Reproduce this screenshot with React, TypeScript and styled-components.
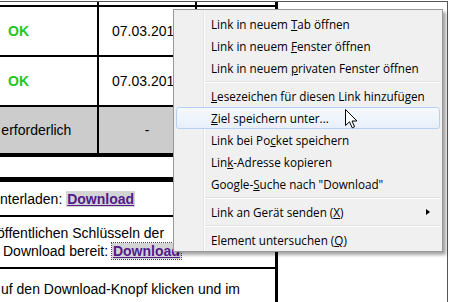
import styled, { createGlobalStyle } from "styled-components";

const GlobalStyle = createGlobalStyle`
  * { box-sizing: border-box; }
  html, body { margin: 0; padding: 0; background: #fff; }
  body { width: 450px; height: 302px; overflow: hidden; }
`;

const Screen = styled.div`
  position: relative;
  width: 450px;
  height: 302px;
  padding-top: 1px;
  overflow: hidden;
  background: #fff;
`;

const Viewport = styled.div`
  width: 448px;
  height: 301px;
  border-top: 1px solid #555;
  border-right: 1px solid #555;
  overflow: hidden;
`;

const Table = styled.div`
  width: 338px;
  margin-left: -60px;
  border-right: 3px solid #000;
  font-family: "Liberation Sans", Arial, sans-serif;
  font-size: 14px;
  color: #000;
`;

const Row = styled.div<{ $h: number; $line: number; $gray?: boolean; $split?: boolean }>`
  display: grid;
  grid-template-columns: ${(p) => (p.$split ? "159px 98px 1fr" : "1fr")};
  height: ${(p) => p.$h}px;
  border-bottom: ${(p) => p.$line}px solid #000;
  background: ${(p) => (p.$gray ? "#cccccc" : "#fff")};
`;

const Cell = styled.div`
  display: flex;
  align-items: center;
  justify-content: center;
  white-space: nowrap;
  overflow: hidden;
  border-right: 2px solid #000;
  &:last-child { border-right: none; }
`;

const Status = styled.span`
  color: #22c722;
  font-weight: bold;
`;

const TextCell = styled.div`
  display: flex;
  flex-direction: column;
  justify-content: center;
  padding-left: 60px;
  line-height: 18px;
  white-space: nowrap;
`;

const Line = styled.div<{ $shift?: number }>`
  margin-left: ${(p) => p.$shift ?? 0}px;
`;

const DlLink = styled.a<{ $focus?: boolean }>`
  color: #551a8b;
  font-weight: bold;
  text-decoration: underline;
  background: #d4d4d4;
  padding: 0 1px;
  outline: ${(p) => (p.$focus ? "1px dotted #444" : "none")};
`;

const Menu = styled.div`
  position: absolute;
  left: 173px;
  top: 9px;
  width: 270px;
  padding: 3px 2px 0 2px;
  border: 1px solid #979797;
  background: linear-gradient(
    to right,
    #f0f0f0 0 29px,
    #e2e3e3 29px 30px,
    #ffffff 30px 31px,
    #f0f0f0 31px
  );
  box-shadow: 3px 3px 3px rgba(0, 0, 0, 0.35);
  font-family: "Open Sans", "Noto Sans", sans-serif;
  font-size: 11.7px;
  color: #000;
`;

const Item = styled.div<{ $hover?: boolean }>`
  display: flex;
  align-items: center;
  height: 22px;
  padding-left: 34px;
  white-space: nowrap;
  border: 1px solid ${(p) => (p.$hover ? "#b4d1f3" : "transparent")};
  border-radius: 3px;
  background: ${(p) => (p.$hover ? "linear-gradient(#f6f9fd, #e8f0fb)" : "transparent")};
`;

const Key = styled.u`
  text-decoration: underline;
`;

const Separator = styled.div`
  height: 6px;
  margin-left: 29px;
  padding-top: 2px;
  &::after {
    content: "";
    display: block;
    height: 1px;
    background: #e0e0e0;
    box-shadow: 0 1px 0 #fff;
  }
`;

const SubArrow = styled.span`
  margin-left: auto;
  margin-right: 9px;
  width: 0;
  height: 0;
  border-left: 4px solid #000;
  border-top: 3.5px solid transparent;
  border-bottom: 3.5px solid transparent;
`;

const Cursor = styled.svg`
  position: absolute;
  left: 345px;
  top: 109px;
`;

export default function App() {
  return (
    <Screen>
      <GlobalStyle />
      <Viewport>
        <Table>
          <Row $h={5} $line={2} $split>
            <Cell />
            <Cell />
            <Cell />
          </Row>
          <Row $h={50} $line={2} $split>
            <Cell><Status>OK</Status></Cell>
            <Cell>07.03.2012</Cell>
            <Cell />
          </Row>
          <Row $h={50} $line={2} $split>
            <Cell><Status>OK</Status></Cell>
            <Cell>07.03.2012</Cell>
            <Cell />
          </Row>
          <Row $h={50} $line={4} $split $gray>
            <Cell>Nicht erforderlich</Cell>
            <Cell>-</Cell>
            <Cell />
          </Row>
          <Row $h={25} $line={5} />
          <Row $h={35} $line={2}>
            <TextCell>
              <Line>
                nterladen: <DlLink>Download</DlLink>
              </Line>
            </TextCell>
          </Row>
          <Row $h={52} $line={2}>
            <TextCell>
              <Line $shift={-3}>öffentlichen Schlüsseln der</Line>
              <Line $shift={3}>
                Download bereit: <DlLink $focus>Download</DlLink>
              </Line>
            </TextCell>
          </Row>
          <Row $h={40} $line={0}>
            <TextCell>
              <Line $shift={1}>uf den Download-Knopf klicken und im</Line>
            </TextCell>
          </Row>
        </Table>
      </Viewport>

      <Menu>
        <Item>Link in neuem&nbsp;<Key>T</Key>ab öffnen</Item>
        <Item>Link in neuem&nbsp;<Key>F</Key>enster öffnen</Item>
        <Item>Link in neuem&nbsp;<Key>p</Key>rivaten Fenster öffnen</Item>
        <Separator />
        <Item><Key>L</Key>esezeichen für diesen Link hinzufügen</Item>
        <Item $hover><Key>Z</Key>iel speichern unter...</Item>
        <Item>Link bei Po<Key>c</Key>ket speichern</Item>
        <Item>Lin<Key>k</Key>-Adresse kopieren</Item>
        <Item>Google-<Key>S</Key>uche nach "Download"</Item>
        <Separator />
        <Item>
          Link an Gerät senden (<Key>X</Key>)
          <SubArrow />
        </Item>
        <Separator />
        <Item>Element untersuchen (<Key>Q</Key>)</Item>
      </Menu>

      <Cursor width="13" height="20" viewBox="0 0 13 20">
        <path
          d="M0.5 0.5 L0.5 16.5 L4.5 12.8 L7.2 18.8 L9.6 17.8 L7 12 L12 12 Z"
          fill="#fff"
          stroke="#000"
          strokeWidth="1"
          strokeLinejoin="miter"
        />
      </Cursor>
    </Screen>
  );
}
